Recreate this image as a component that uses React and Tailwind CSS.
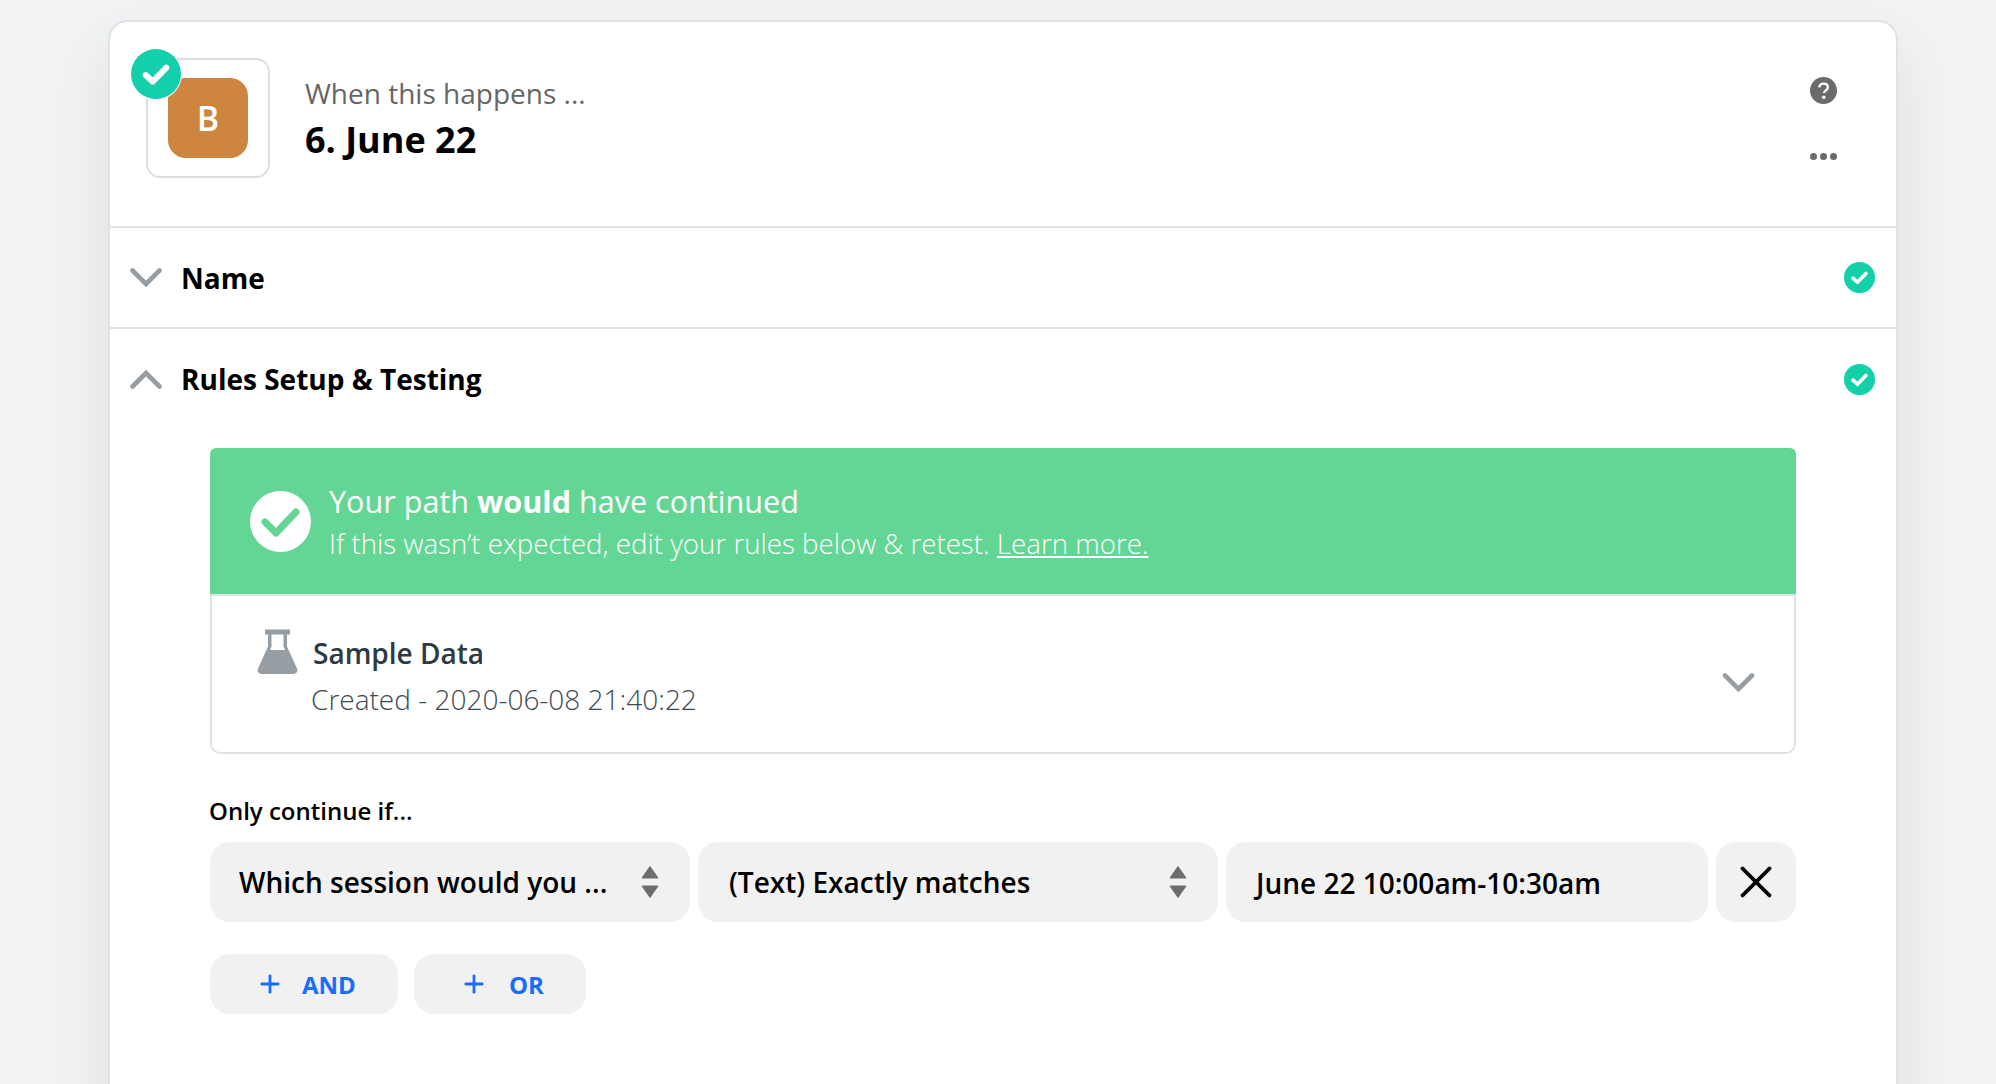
import { Plus, X } from "lucide-react";

const font = "font-['Open_Sans','Liberation_Sans',sans-serif]";

const CheckDot = ({ className }) => (
  <svg viewBox="0 0 30 30" className={className}>
    <circle cx="15" cy="15" r="15" fill="#13d0ab" />
    <path d="M8.8 15.6l4.2 4 8.2-8.4" fill="none" stroke="#fff" strokeWidth="3.6" strokeLinecap="round" strokeLinejoin="round" />
  </svg>
);

const Chevron = ({ up, className }) => (
  <svg viewBox="0 0 32 20" className={className}>
    <path d={up ? "M2.5 17.5L16 4l13.5 13.5" : "M2.5 2.5L16 16 29.5 2.5"} fill="none" stroke="#969ea3" strokeWidth="4.6" strokeLinecap="round" />
  </svg>
);

const UpDown = () => (
  <svg viewBox="0 0 18 34" className="w-[18px] h-[34px] shrink-0">
    <path d="M9 1.5L17 13H1z" fill="#6d6d6d" stroke="#6d6d6d" strokeWidth="1" strokeLinejoin="round" />
    <path d="M9 32.5L17 21H1z" fill="#6d6d6d" stroke="#6d6d6d" strokeWidth="1" strokeLinejoin="round" />
  </svg>
);

const Section = ({ title, up, height }) => (
  <div className={`${height} flex items-center pl-[20px] pr-[21px]`}>
    <Chevron up={up} className="w-[32px] h-[20px]" />
    <span className="ml-[19px] text-[28px] font-bold text-black flex-1">{title}</span>
    <CheckDot className="w-[31px] h-[31px]" />
  </div>
);

const Select = ({ label, className }) => (
  <div className={`h-[80px] bg-[#f1f1f1] rounded-[20px] flex items-center justify-between pr-[31px] ${className}`}>
    <span className="text-[28px] font-semibold text-black whitespace-nowrap">{label}</span>
    <UpDown />
  </div>
);

const AddButton = ({ label, className }) => (
  <button className={`h-[60px] bg-[#f1f1f1] rounded-[20px] flex items-center text-[#1a6cff] ${className}`}>
    <Plus size={28} strokeWidth={2.4} />
    <span className="mt-px text-[24px] font-bold">{label}</span>
  </button>
);

export default function App() {
  return (
    <div className={`h-[1084px] overflow-hidden bg-[#f1f2f4] pt-[20px] ${font}`}>
      <div className="ml-[108px] w-[1790px] h-[1200px] bg-white border-2 border-[#dfe3e6] rounded-[20px] shadow-[0_30px_60px_rgba(0,0,0,0.08)]">
        {/* step header */}
        <div className="h-[206px] border-b-2 border-[#dfe3e6] flex pl-[36px] pr-[59px] pt-[36px]">
          <div className="relative w-[124px] h-[120px] border-2 border-[#dcdfe1] rounded-[14px] flex items-center justify-center shrink-0">
            <div className="w-[80px] h-[80px] bg-[#cd853f] rounded-[18px] flex items-center justify-center text-white text-[34px] font-semibold">B</div>
            <div className="absolute left-[-18px] top-[-12px] w-[52px] h-[52px] rounded-full bg-white flex items-center justify-center">
              <CheckDot className="w-[50px] h-[50px]" />
            </div>
          </div>
          <div className="ml-[35px] pt-[16px] flex-1">
            <div className="text-[28px] leading-[38px] text-[#666666]">When this happens ...</div>
            <div className="mt-[4px] text-[36px] leading-[48px] font-bold text-black">6. June 22</div>
          </div>
          <div className="flex flex-col items-center pt-[19px] gap-[49px]">
            <svg viewBox="0 0 28 28" className="w-[27px] h-[27px]">
              <circle cx="14" cy="14" r="14" fill="#6b6b6b" />
              <path d="M9.6 10.8c.2-2.6 2-4 4.5-4 2.600 0 4.400 1.500 4.400 3.700 0 1.700-.9 2.600-2.200 3.400-1.200.8-1.700 1.300-1.700 2.800" fill="none" stroke="#fff" strokeWidth="2.400" />
              <circle cx="14.200" cy="21" r="1.800" fill="#fff" />
            </svg>
            <div className="flex gap-[3px]">
              <span className="w-[7px] h-[7px] rounded-full bg-[#6b6b6b]" />
              <span className="w-[7px] h-[7px] rounded-full bg-[#6b6b6b]" />
              <span className="w-[7px] h-[7px] rounded-full bg-[#6b6b6b]" />
            </div>
          </div>
        </div>

        <div className="border-b-2 border-[#dfe3e6]">
          <Section title="Name" height="h-[99px]" />
        </div>
        <Section title="Rules Setup & Testing" up height="h-[100px]" />

        {/* rules body */}
        <div className="pl-[100px] pr-[100px] pt-[19px]">
          <div className="h-[146px] bg-[#63d695] rounded-t-[6px] flex items-center pl-[40px] text-white">
            <svg viewBox="0 0 61 61" className="w-[61px] h-[61px] shrink-0">
              <circle cx="30.500" cy="30.500" r="30.500" fill="#fff" />
              <path d="M15 31l11 11 20-21" fill="none" stroke="#63d695" strokeWidth="7" strokeLinecap="round" strokeLinejoin="round" />
            </svg>
            <div className="ml-[18px]">
              <div className="text-[30.600px] leading-[44px]">
                Your path <span className="font-bold">would</span> have continued
              </div>
              <div className="text-[27.700px] leading-[40px] font-light">
                If this wasn’t expected, edit your rules below &amp; retest. <span className="underline">Learn more.</span>
              </div>
            </div>
          </div>
          <div className="h-[160px] border-2 border-[#dfe3e6] rounded-b-[10px] flex items-center pl-[45px] pr-[39px]">
            <div className="flex-1 -mt-[4px]">
              <div className="flex items-center h-[52px]">
                <svg viewBox="0 0 41 46" className="w-[41px] h-[47px] shrink-0 -mt-[3px]">
                  <path d="M8 1h25v5h-3v12l10 22c1.200 2.800-.4 5.500-3.500 5.500h-32C1.400 45.500-.2 42.800 1 40l10-22V6H8z" fill="#969ea3" />
                  <path d="M14.500 6h12v12l1.500 3.500H13L14.500 18z" fill="#fff" />
                </svg>
                <span className="ml-[15px] text-[28px] font-semibold text-[#2d3a43]">Sample Data</span>
              </div>
              <div className="ml-[54px] mt-px text-[28px] leading-[38px] font-light text-[#3e4a52]">Created - 2020-06-08 21:40:22</div>
            </div>
            <Chevron className="w-[33px] h-[20px] mt-[17px]" />
          </div>

          <div className="mt-[41px] -ml-px text-[24px] leading-[32px] font-semibold text-black">Only continue if...</div>
          <div className="mt-[15px] flex gap-[8px]">
            <Select label="Which session would you ..." className="w-[480px] pl-[29px]" />
            <Select label="(Text) Exactly matches" className="w-[520px] pl-[31px]" />
            <div className="w-[482px] h-[80px] bg-[#f1f1f1] rounded-[20px] flex items-center pl-[30px] text-[28px] font-semibold text-black">
              <span className="mt-[2px]">June 22 10:00am-10:30am</span>
            </div>
            <div className="w-[80px] h-[80px] bg-[#f1f1f1] rounded-[20px] flex items-center justify-center text-black">
              <X size={54} strokeWidth={1.7} />
            </div>
          </div>
          <div className="mt-[32px] flex gap-[16px]">
            <AddButton label="AND" className="w-[188px] pl-[46px] gap-[18px]" />
            <AddButton label="OR" className="w-[172px] pl-[46px] gap-[21px]" />
          </div>
        </div>
      </div>
    </div>
  );
}
